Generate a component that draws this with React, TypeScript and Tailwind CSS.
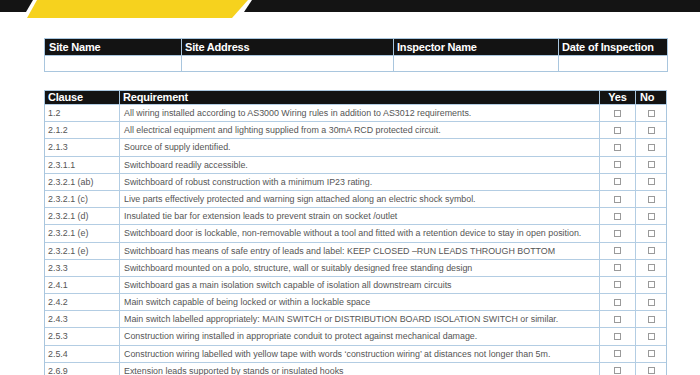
import React from 'react'

const rows: [string, string][] = [
  ['1.2', 'All wiring installed according to AS3000 Wiring rules in addition to AS3012 requirements.'],
  ['2.1.2', 'All electrical equipment and lighting supplied from a 30mA RCD protected circuit.'],
  ['2.1.3', 'Source of supply identified.'],
  ['2.3.1.1', 'Switchboard readily accessible.'],
  ['2.3.2.1 (ab)', 'Switchboard of robust construction with a minimum IP23 rating.'],
  ['2.3.2.1 (c)', 'Live parts effectively protected and warning sign attached along an electric shock symbol.'],
  ['2.3.2.1 (d)', 'Insulated tie bar for extension leads to prevent strain on socket /outlet'],
  ['2.3.2.1 (e)', 'Switchboard door is lockable, non-removable without a tool and fitted with a retention device to stay in open position.'],
  ['2.3.2.1 (e)', 'Switchboard has means of safe entry of leads and label: KEEP CLOSED \u2013RUN LEADS THROUGH BOTTOM'],
  ['2.3.3', 'Switchboard mounted on a polo, structure, wall or suitably designed free standing design'],
  ['2.4.1', 'Switchboard gas a main isolation switch capable of isolation all downstream circuits'],
  ['2.4.2', 'Main switch capable of being locked or within a lockable space'],
  ['2.4.3', 'Main switch labelled appropriately: MAIN SWITCH or DISTRIBUTION BOARD ISOLATION SWITCH or similar.'],
  ['2.5.3', 'Construction wiring installed in appropriate conduit to protect against mechanical damage.'],
  ['2.5.4', "Construction wiring labelled with yellow tape with words \u2018construction wiring\u2019 at distances not longer than 5m."],
  ['2.6.9', 'Extension leads supported by stands or insulated hooks'],
]

function Box() {
  return <span className="block w-[7px] h-[7px] border border-[#9a9a9a] bg-white" />
}

export default function App() {
  return (
    <div className="w-[700px] h-[375px] bg-white overflow-hidden font-['Liberation_Sans']">
      {/* banner */}
      <svg width="700" height="20" viewBox="0 0 700 20" className="block">
        <polygon points="0,0 33,0 26,12 0,12" fill="#141414" />
        <polygon points="37,0 248,0 232,18 27,18" fill="#f6d21e" />
        <polygon points="252,0 700,0 700,12 244,12" fill="#141414" />
      </svg>

      <div className="ml-[44px] mt-[18px] w-[624px]">
        {/* site info */}
        <div className="border border-[#a9c6de]">
          <div className="flex h-[16px] bg-[#131313] text-white font-bold text-[11px] leading-[16px] tracking-[-0.2px]">
            <div className="w-[137px] pl-[4px] border-r border-[#a9c6de]">Site Name</div>
            <div className="w-[212px] pl-[3px] border-r border-[#a9c6de]">Site Address</div>
            <div className="w-[165px] pl-[3px] border-r border-[#a9c6de]">Inspector Name</div>
            <div className="flex-1 pl-[3px] whitespace-nowrap">Date of Inspection</div>
          </div>
          <div className="flex h-[16px] border-t border-[#a9c6de]">
            <div className="w-[137px] border-r border-[#a9c6de]" />
            <div className="w-[212px] border-r border-[#a9c6de]" />
            <div className="w-[165px] border-r border-[#a9c6de]" />
            <div className="flex-1" />
          </div>
        </div>

        {/* checklist */}
        <div className="mt-[18px] w-[623px] border border-[#a9c6de]">
          <div className="flex h-[13px] bg-[#131313] text-white font-bold text-[11px] leading-[13px] tracking-[-0.2px]">
            <div className="w-[75px] pl-[3px] border-r border-[#a9c6de]">Clause</div>
            <div className="w-[480px] pl-[3px] border-r border-[#a9c6de]">Requirement</div>
            <div className="w-[36px] text-center border-r border-[#a9c6de]">Yes</div>
            <div className="flex-1 pl-[4px]">No</div>
          </div>
          {rows.map(([clause, req], i) => (
            <div
              key={i}
              className="flex h-[17.2px] border-t-[1.5px] border-[#b3cde3] text-[8.9px] text-[#555] leading-[16px]"
            >
              <div className="w-[75px] pl-[3px] border-r-[1.5px] border-[#b3cde3]">{clause}</div>
              <div className="w-[480px] pl-[4px] border-r-[1.5px] border-[#b3cde3] whitespace-nowrap overflow-hidden">
                {req}
              </div>
              <div className="w-[36px] flex items-center justify-center border-r-[1.5px] border-[#b3cde3]">
                <Box />
              </div>
              <div className="flex-1 flex items-center justify-center">
                <Box />
              </div>
            </div>
          ))}
        </div>
      </div>
    </div>
  )
}
